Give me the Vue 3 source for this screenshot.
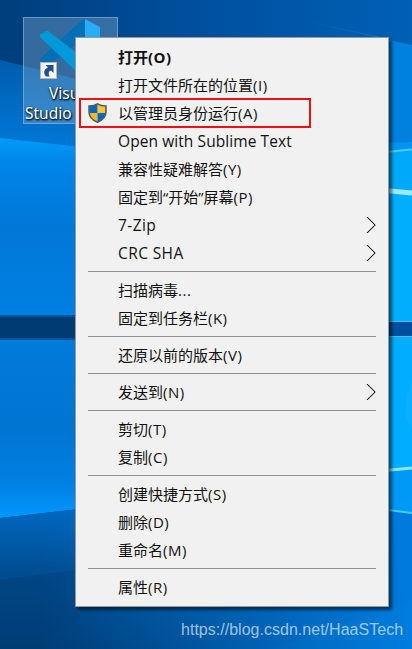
<script setup>
const groups = [
  [
    { text: '打开', tail: '(O)', bold: true },
    { text: '打开文件所在的位置', tail: '(I)' },
    { text: '以管理员身份运行', tail: '(A)', shield: true },
    { text: '', tail: 'Open with Sublime Text', latin: true, tight: true },
    { text: '兼容性疑难解答', tail: '(Y)' },
    { text: '固定到“开始”屏幕', tail: '(P)' },
    { text: '', tail: '7-Zip', latin: true, sub: true },
    { text: '', tail: 'CRC SHA', latin: true, sub: true },
  ],
  [
    { text: '扫描病毒', tail: '...' },
    { text: '固定到任务栏', tail: '(K)' },
  ],
  [{ text: '还原以前的版本', tail: '(V)' }],
  [{ text: '发送到', tail: '(N)', sub: true }],
  [
    { text: '剪切', tail: '(T)' },
    { text: '复制', tail: '(C)' },
  ],
  [
    { text: '创建快捷方式', tail: '(S)' },
    { text: '删除', tail: '(D)' },
    { text: '重命名', tail: '(M)' },
  ],
  [{ text: '属性', tail: '(R)' }],
]
</script>

<template>
  <div class="desktop">
    <svg class="wallpaper" width="412" height="649" viewBox="0 0 412 649" aria-hidden="true">
      <defs>
        <linearGradient id="sky" x1="0" y1="0" x2="1" y2="0">
          <stop offset="0" stop-color="#003e7b" />
          <stop offset=".5" stop-color="#0050a0" />
          <stop offset="1" stop-color="#0060b4" />
        </linearGradient>
        <linearGradient id="haze" x1="0" y1="0" x2="0" y2="1">
          <stop offset="0" stop-color="#005cad" />
          <stop offset="1" stop-color="#0079d8" />
        </linearGradient>
        <linearGradient id="paneTop" x1="0" y1="0" x2="0" y2="1">
          <stop offset="0" stop-color="#009bfa" />
          <stop offset=".14" stop-color="#0085e8" />
          <stop offset=".5" stop-color="#0078d8" />
          <stop offset="1" stop-color="#0080e2" />
        </linearGradient>
        <linearGradient id="paneLow" x1="0" y1="0" x2="0" y2="1">
          <stop offset="0" stop-color="#007bda" />
          <stop offset=".5" stop-color="#0075d2" />
          <stop offset=".8" stop-color="#0080e2" />
          <stop offset="1" stop-color="#0098fa" />
        </linearGradient>
        <linearGradient id="floor" x1="0" y1="0" x2="0" y2="1">
          <stop offset="0" stop-color="#006dc7" />
          <stop offset=".45" stop-color="#004f94" />
          <stop offset="1" stop-color="#003c74" />
        </linearGradient>
        <linearGradient id="floorGlow" x1="0" y1="0" x2="1" y2="0">
          <stop offset=".1" stop-color="#0078d8" stop-opacity="0" />
          <stop offset="1" stop-color="#007bdd" />
        </linearGradient>
        <linearGradient id="right" x1="0" y1="0" x2="0" y2="1">
          <stop offset="0" stop-color="#0069c1" />
          <stop offset=".14" stop-color="#0080df" />
          <stop offset="1" stop-color="#0080df" />
        </linearGradient>
      </defs>
      <rect width="412" height="649" fill="url(#sky)" />
      <path d="M0 60 L80 80 V150 H0Z" fill="url(#haze)" />
      <path d="M0 138 L80 147 V316 H0Z" fill="url(#paneTop)" />
      <path d="M0 339 H80 V509 L0 518Z" fill="url(#paneLow)" />
      <rect y="315" width="80" height="25" fill="#00569f" />
      <rect y="317" width="80" height="21" fill="#003c73" />
      <path d="M0 518 L80 509 L412 500 V649 H0Z" fill="url(#floor)" />
      <path d="M0 580 L80 569 V649 H0Z" fill="#003d76" opacity=".45" />
      <path d="M80 509 H412 V649 H0 V580Z" fill="url(#floorGlow)" />
      <path d="M270 649 L412 600 V649Z" fill="#008be8" opacity=".12" />
      <path d="M300 20 L412 45 V155 L380 155 V37Z" fill="url(#right)" />
      <path d="M380 143 L412 142 V190 H380Z" fill="#0095f0" />
      <path d="M380 152 L412 149 V194 L380 191Z" fill="#00a9fa" />
      <path d="M380 152.500 L412 149.500" stroke="#4acbf3" stroke-width="2" />
      <rect x="380" y="192" width="32" height="130" fill="#00aefe" />
      <path d="M380 190 L412 193" stroke="#9beaff" stroke-width="5" />
      <rect x="380" y="322" width="32" height="15" fill="#004f9e" />
      <path d="M380 321.500 H412 M380 336.500 H412" stroke="#4bb9ee" />
      <path d="M380 337 H412 V468 L380 471Z" fill="#00adfe" />
      <path d="M412 380 Q399 410 412 430Z" fill="#28b7ff" opacity=".3" />
      <path d="M380 471 L412 468 V513 L380 509Z" fill="#0099f5" />
      <path d="M380 471 L412 468" stroke="#86e7ff" stroke-width="3" />
      <path d="M380 509 L412 513" stroke="#40cdf2" stroke-width="2" />
    </svg>

    <div class="shortcut">
      <svg class="app-icon" width="62" height="62" viewBox="0 0 62 62" aria-hidden="true">
        <path d="M0 42 Q0 39 2 38 L41 2 Q43 0 46 0 V18 L7 47 H4Z" fill="#0071b7" />
        <path d="M0 18 Q-1 16 1 15 L6 12 H8 L46 41 V61 L41 57Z" fill="#009ada" />
        <path d="M45 0 L60 8 V53 L45 60Z" fill="#27adf2" />
      </svg>
      <svg class="link-badge" width="17" height="17" viewBox="0 0 17 17" aria-hidden="true">
        <rect x=".5" y=".5" width="16" height="16" fill="#f5f5f5" stroke="#b9b4ab" />
        <path d="M5.500 3 H13.500 V11 L11 8.500 C8.500 9 8 11 9.500 14.500 H6 C3 11 4 7 8 5.500Z" fill="#254d8d" />
      </svg>
      <div class="label"><span>Visual</span><span>Studio Code</span></div>
    </div>

    <div class="menu" role="menu">
      <div v-for="(group, g) in groups" :key="g" class="group">
        <div v-for="(item, i) in group" :key="i" class="item" :class="{ bold: item.bold, marked: item.shield }" role="menuitem">
          <span class="gutter">
            <svg v-if="item.shield" width="19" height="20" viewBox="0 0 19 20" aria-hidden="true">
              <path d="M9.500 .7 C7 2.500 4 3 1 3 V9 C1 14 4 17 9.500 19.300Z" fill="#f9b51b" />
              <path d="M9.500 .7 C12 2.500 15 3 18 3 V9 C18 14 15 17 9.500 19.300Z" fill="#0067c5" />
              <path d="M1.500 3 C4.500 3 7 2.500 9.500 .7 V10 H1.500Z" fill="#0067c5" />
              <path d="M9.500 .7 C12 2.500 14.500 3 17.500 3 V10 H9.500Z" fill="#ffc52e" />
              <path d="M9.500 .8 C7 2.600 4 3.100 1 3.100 V9 C1 14 4 17 9.500 19.200 C15 17 18 14 18 9 V3.100 C15 3.100 12 2.600 9.500 .8Z" fill="none" stroke="#525a62" stroke-width="1.500" />
            </svg>
          </span>
          <span class="text">{{ item.text }}<span class="tail" :class="{ latin: item.latin, tight: item.tight }">{{ item.tail }}</span></span>
          <svg v-if="item.sub" class="chevron" width="11" height="18" viewBox="0 0 11 18" aria-hidden="true">
            <path d="M.5 1 L8.500 9 L.5 17" fill="none" stroke="#d89a48" stroke-width=".8" />
            <path d="M1.500 1 L9.500 9 L1.500 17" fill="none" stroke="#4279bd" stroke-width=".8" />
            <path d="M1 1 L9 9 L1 17" fill="none" stroke="#1b1010" stroke-width=".9" />
          </svg>
        </div>
      </div>
    </div>
    <div class="watermark">https://blog.csdn.net/HaaSTech</div>
  </div>
</template>

<style>
body {
  margin: 0;
  overflow: hidden;
}
</style>

<style scoped>
.desktop {
  position: relative;
  width: 412px;
  height: 649px;
  overflow: hidden;
  font-family: "Open Sans", "Noto Sans CJK SC", sans-serif;
}
.wallpaper {
  display: block;
}
.shortcut {
  position: absolute;
  left: 23px;
  top: 17px;
  box-sizing: border-box;
  width: 95px;
  height: 107px;
  border: 1px solid rgba(150, 190, 222, .55);
  background: rgba(145, 180, 207, .36);
}
.app-icon {
  position: absolute;
  left: 16px;
  top: 1px;
}
.link-badge {
  position: absolute;
  left: 16px;
  top: 44px;
}
.label {
  position: absolute;
  left: 1px;
  top: 65px;
  display: flex;
  flex-direction: column;
  white-space: nowrap;
  color: #fff;
  font-family: "Noto Sans", sans-serif;
  font-size: 15.500px;
  line-height: 20px;
  text-shadow: 1px 1px 2px #000, 0 1px 2px rgba(0, 0, 0, .8);
}
.label span:first-child {
  padding-left: 24px;
}
.menu {
  position: absolute;
  left: 75px;
  top: 37px;
  box-sizing: border-box;
  width: 314px;
  height: 570px;
  padding: 6px 12px 4px;
  border: 1px solid #999;
  background: #f1f1f1;
  box-shadow: 3px 3px 3px rgba(0, 0, 0, .55);
  color: #111;
}
.group + .group {
  margin-top: 3px;
  padding-top: 5px;
  border-top: 1px solid #919191;
}
.item {
  position: relative;
  display: flex;
  align-items: center;
  height: 28px;
  font-size: 15px;
  line-height: 28px;
  white-space: nowrap;
}
.gutter {
  display: flex;
  width: 30px;
  padding: 0 0 3px;
  box-sizing: border-box;
}
.text {
  flex: 1;
  padding-bottom: 2px;
}
.tail {
  letter-spacing: .5px;
}
.tail.latin {
  font-size: 15.500px;
  letter-spacing: .4px;
}
.tail.tight {
  letter-spacing: .08px;
}
.bold {
  font-weight: 700;
}
.marked::before {
  content: "";
  position: absolute;
  left: -9px;
  top: -2px;
  box-sizing: border-box;
  width: 232px;
  height: 30px;
  border: 2px solid #f00f12;
}
.chevron {
  margin-right: -1px;
  margin-top: -3px;
}
.watermark {
  position: absolute;
  left: 181px;
  top: 620px;
  color: rgba(235, 245, 255, .68);
  font: 16px/20px "Liberation Sans", sans-serif;
  letter-spacing: .02px;
  white-space: nowrap;
}
</style>
